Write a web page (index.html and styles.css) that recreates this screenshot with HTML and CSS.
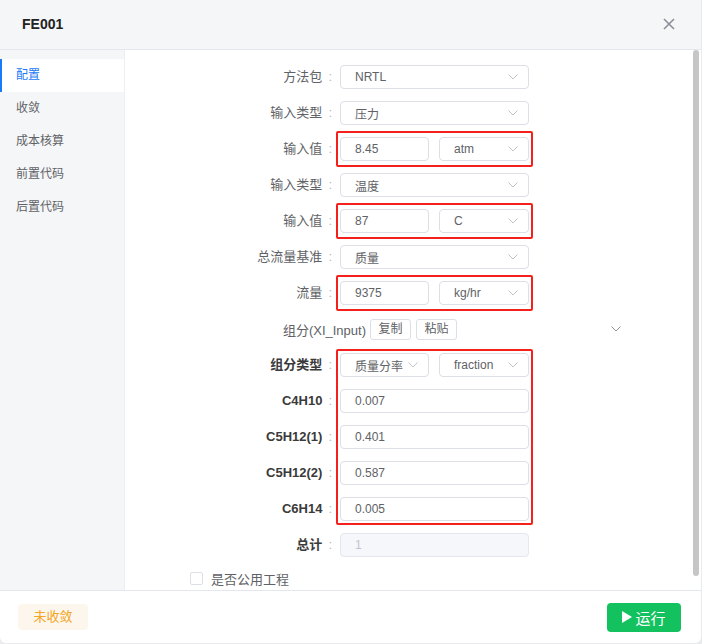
FILE: index.html
```html
<!DOCTYPE html>
<html lang="zh">
<head>
    <meta charset="UTF-8">
    <title>FE001</title>
    <link rel="stylesheet" href="styles.css">
</head>
<body>
<div class="dialog">
    <div class="dialog-header">
        <span class="dialog-title">FE001</span>
        <svg class="close" width="12" height="12" viewBox="0 0 12 12">
            <path d="M1 1L11 11M11 1L1 11" stroke="#8c8f96" stroke-width="1.6" fill="none"/>
        </svg>
    </div>
    <div class="dialog-body">
        <ul class="side">
            <li class="selected">配置</li>
            <li>收敛</li>
            <li>成本核算</li>
            <li>前置代码</li>
            <li>后置代码</li>
        </ul>
        <div class="content-wrap">
        <div class="content">
            <div class="row">
                <span class="label">方法包<i class="colon">:</i></span>
                <div class="field select">NRTL<svg class="arrow" width="10" height="6" viewBox="0 0 10 6"><path d="M0.5 0.5L5 5L9.5 0.5" stroke="#c0c4cc" fill="none"/></svg></div>
            </div>
            <div class="row">
                <span class="label">输入类型<i class="colon">:</i></span>
                <div class="field select">压力<svg class="arrow" width="10" height="6" viewBox="0 0 10 6"><path d="M0.5 0.5L5 5L9.5 0.5" stroke="#c0c4cc" fill="none"/></svg></div>
            </div>
            <div class="row">
                <span class="label">输入值<i class="colon">:</i></span>
                <div class="mark">
                    <div class="field half">8.45</div>
                    <div class="field unit select">atm<svg class="arrow" width="10" height="6" viewBox="0 0 10 6"><path d="M0.5 0.5L5 5L9.5 0.5" stroke="#c0c4cc" fill="none"/></svg></div>
                </div>
            </div>
            <div class="row">
                <span class="label">输入类型<i class="colon">:</i></span>
                <div class="field select">温度<svg class="arrow" width="10" height="6" viewBox="0 0 10 6"><path d="M0.5 0.5L5 5L9.5 0.5" stroke="#c0c4cc" fill="none"/></svg></div>
            </div>
            <div class="row">
                <span class="label">输入值<i class="colon">:</i></span>
                <div class="mark">
                    <div class="field half">87</div>
                    <div class="field unit select">C<svg class="arrow" width="10" height="6" viewBox="0 0 10 6"><path d="M0.5 0.5L5 5L9.5 0.5" stroke="#c0c4cc" fill="none"/></svg></div>
                </div>
            </div>
            <div class="row">
                <span class="label">总流量基准<i class="colon">:</i></span>
                <div class="field select">质量<svg class="arrow" width="10" height="6" viewBox="0 0 10 6"><path d="M0.5 0.5L5 5L9.5 0.5" stroke="#c0c4cc" fill="none"/></svg></div>
            </div>
            <div class="row">
                <span class="label">流量<i class="colon">:</i></span>
                <div class="mark">
                    <div class="field half">9375</div>
                    <div class="field unit select">kg/hr<svg class="arrow" width="10" height="6" viewBox="0 0 10 6"><path d="M0.5 0.5L5 5L9.5 0.5" stroke="#c0c4cc" fill="none"/></svg></div>
                </div>
            </div>
            <div class="row section">
                <span class="section-title">组分(XI_Input)</span>
                <span class="mini-btn">复制</span>
                <span class="mini-btn">粘贴</span>
                <svg class="section-arrow" width="10" height="6" viewBox="0 0 10 6"><path d="M0.5 0.5L5 5L9.5 0.5" stroke="#909399" fill="none"/></svg>
            </div>
            <div class="group">
                <div class="group-labels">
                    <span class="label strong">组分类型<i class="colon">:</i></span>
                    <span class="label strong">C4H10<i class="colon">:</i></span>
                    <span class="label strong">C5H12(1)<i class="colon">:</i></span>
                    <span class="label strong">C5H12(2)<i class="colon">:</i></span>
                    <span class="label strong">C6H14<i class="colon">:</i></span>
                </div>
                <div class="group-fields">
                    <div class="pair">
                        <div class="field half select">质量分率<svg class="arrow" width="10" height="6" viewBox="0 0 10 6"><path d="M0.5 0.5L5 5L9.5 0.5" stroke="#c0c4cc" fill="none"/></svg></div>
                        <div class="field unit select">fraction<svg class="arrow" width="10" height="6" viewBox="0 0 10 6"><path d="M0.5 0.5L5 5L9.5 0.5" stroke="#c0c4cc" fill="none"/></svg></div>
                    </div>
                    <div class="field">0.007</div>
                    <div class="field">0.401</div>
                    <div class="field">0.587</div>
                    <div class="field">0.005</div>
                </div>
            </div>
            <div class="row">
                <span class="label strong">总计<i class="colon">:</i></span>
                <div class="field disabled">1</div>
            </div>
            <label class="check-row">
                <span class="checkbox"></span>
                <span>是否公用工程</span>
            </label>
        </div>
        <div class="scroll-thumb"></div>
        </div>
    </div>
    <div class="dialog-footer">
        <span class="tag">未收敛</span>
        <span class="run-btn">
            <svg width="10" height="12" viewBox="0 0 10 12"><path d="M0 0L10 6L0 12Z" fill="#fff"/></svg>
            运行
        </span>
    </div>
</div>
</body>
</html>
```

FILE: styles.css
```css
*{
    margin: 0;
    padding: 0;
    box-sizing: border-box;
}
body{
    background-color: #e9ebee;
    font-family: "Liberation Sans", "Noto Sans CJK SC", sans-serif;
    font-size: 12px;
    color: #606266;
}
.dialog{
    width: 701px;
    height: 643px;
    background-color: #fff;
    border-radius: 0 0 6px 6px;
    display: flex;
    flex-direction: column;
    overflow: hidden;
}
.dialog-header{
    height: 50px;
    flex: none;
    background-color: #f5f6f8;
    border-bottom: 1px solid #e4e7ed;
    display: flex;
    align-items: center;
    justify-content: space-between;
    padding: 0 26px 2px 22px;
}
.dialog-title{
    font-size: 14px;
    font-weight: bold;
    color: #222;
}
.dialog-body{
    flex: 1;
    display: flex;
    min-height: 0;
}
.side{
    width: 125px;
    flex: none;
    background-color: #f5f6f8;
    border-right: 1px solid #eceef1;
    padding-top: 9px;
}
.side li{
    list-style: none;
    height: 33px;
    line-height: 33px;
    padding-left: 16px;
    font-size: 12px;
    color: #606266;
}
.side .selected{
    background-color: #fff;
    color: #1a7af8;
    box-shadow: inset 2px 0 #1a7af8;
}
.content-wrap{
    flex: 1;
    position: relative;
    overflow: hidden;
}
.content{
    height: 100%;
    overflow: hidden;
    padding: 15px 0 12px;
}
.scroll-thumb{
    position: absolute;
    top: 0;
    right: 2px;
    width: 6px;
    height: 526px;
    border-radius: 3px;
    background-color: #c6c6c6;
}

/* form rows */
.row{
    display: flex;
    align-items: center;
    height: 24px;
    margin-bottom: 12px;
}
.label{
    width: 215px;
    flex: none;
    height: 24px;
    line-height: 24px;
    padding-right: 8px;
    text-align: right;
    font-size: 13px;
    color: #606266;
}
.label .colon{
    font-style: normal;
    margin-left: 6px;
    color: #b4b7bc;
    font-weight: normal;
}
.label.strong{
    font-weight: bold;
    color: #3a3a3a;
}
.field{
    width: 189px;
    height: 24px;
    border: 1px solid #dcdfe6;
    border-radius: 4px;
    padding: 0 10px 0 14px;
    display: flex;
    align-items: center;
    justify-content: space-between;
    font-size: 12px;
    color: #606266;
    background-color: #fff;
}
.field.half{
    width: 89px;
}
.field.unit{
    width: 90px;
    margin-left: 10px;
}
.field.disabled{
    background-color: #f5f7fa;
    border-color: #e4e7ed;
    color: #c0c4cc;
}
.mark{
    display: flex;
    border: 2px solid #f3201c;
    border-radius: 2px;
    padding: 4px 2px;
    margin-left: -4px;
}

/* component section */
.section-title{
    width: 241px;
    flex: none;
    text-align: right;
    font-size: 13px;
    color: #606266;
}
.mini-btn{
    height: 21px;
    width: 41px;
    margin-left: 4px;
    border: 1px solid #dcdfe6;
    border-radius: 3px;
    font-size: 12px;
    line-height: 19px;
    text-align: center;
    color: #606266;
}
.mini-btn + .mini-btn{
    margin-left: 5px;
}
.section-arrow{
    margin-left: auto;
    margin-right: 80px;
}
.group{
    display: flex;
    margin-bottom: 12px;
}
.group-labels{
    display: flex;
    flex-direction: column;
    gap: 12px;
}
.group-fields{
    display: flex;
    flex-direction: column;
    gap: 12px;
    border: 2px solid #f3201c;
    border-radius: 2px;
    padding: 2px;
    margin: -4px 0 -4px -4px;
}
.pair{
    display: flex;
}
.check-row{
    display: flex;
    align-items: center;
    margin-top: 9px;
    padding-left: 65px;
    font-size: 13px;
    color: #606266;
}
.checkbox{
    width: 13px;
    height: 13px;
    border: 1px solid #dcdfe6;
    border-radius: 2px;
    margin-right: 8px;
    background-color: #fff;
}

/* footer */
.dialog-footer{
    height: 53px;
    flex: none;
    border-top: 1px solid #e4e7ed;
    display: flex;
    align-items: center;
    justify-content: space-between;
    padding: 0 20px 0 18px;
}
.tag{
    width: 70px;
    height: 26px;
    line-height: 26px;
    text-align: center;
    background-color: #fdf6ec;
    color: #f3a526;
    border-radius: 4px;
    font-size: 13px;
}
.run-btn{
    width: 74px;
    height: 29px;
    display: flex;
    align-items: center;
    justify-content: center;
    gap: 3px;
    background-color: #13c15f;
    color: #fff;
    border-radius: 4px;
    font-size: 15px;
}
```
